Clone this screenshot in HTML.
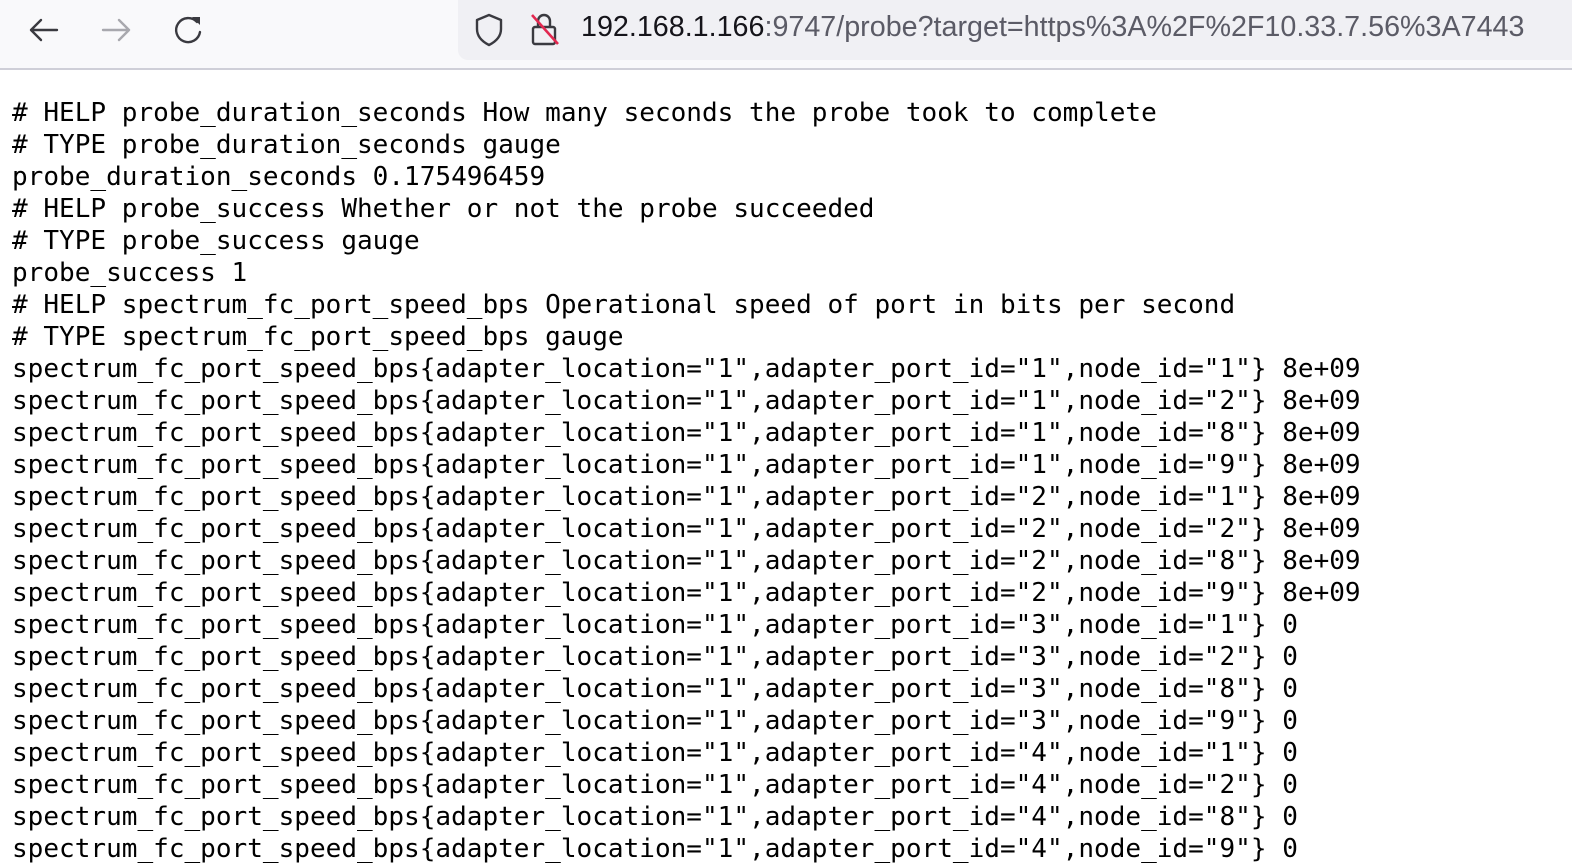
<!DOCTYPE html>
<html><head><style>
html,body{margin:0;padding:0;width:1572px;height:852px;overflow:hidden;background:#fff}
.bar{position:absolute;left:0;top:0;width:1572px;height:68px;background:#f9f9fb;border-bottom:2px solid #cfcfd8}
.url{position:absolute;left:458px;top:0;width:1114px;height:60px;background:#f0f0f4;border-radius:0 0 0 10px}
.u{position:absolute;left:581px;top:11px;font:28.7px "Liberation Sans",sans-serif;color:#15141a;white-space:nowrap}
.u span{color:#5b5b66}
pre{position:absolute;left:12px;top:97px;margin:0;font:26.05px/32px "DejaVu Sans Mono",monospace;color:#000}
</style></head><body>
<div class="bar">
<svg style="position:absolute;left:26px;top:14px" width="36" height="32" viewBox="0 0 36 32"><path d="M31 16H5M15 6L5 16l10 10" fill="none" stroke="#3a3a40" stroke-width="2.4" stroke-linecap="round" stroke-linejoin="round"/></svg>
<svg style="position:absolute;left:98px;top:14px" width="36" height="32" viewBox="0 0 36 32"><path d="M5 16h26M21 6l10 10-10 10" fill="none" stroke="#a8a8ae" stroke-width="2.4" stroke-linecap="round" stroke-linejoin="round"/></svg>
<svg style="position:absolute;left:170px;top:12px" width="36" height="36" viewBox="0 0 36 36"><path d="M27 10A12 12 0 1 0 30 20" fill="none" stroke="#3a3a40" stroke-width="2.4" stroke-linecap="round"/><path d="M22 5h8v8z" fill="#3a3a40"/></svg>
<div class="url"></div>
<svg style="position:absolute;left:472px;top:12px" width="34" height="36" viewBox="0 0 34 36"><path d="M17 3L5 8v9c0 8 6 13 12 16 6-3 12-8 12-16V8z" fill="none" stroke="#3a3a40" stroke-width="2.4" stroke-linejoin="round"/></svg>
<svg style="position:absolute;left:528px;top:10px" width="34" height="38" viewBox="0 0 34 38"><rect x="5" y="17" width="22" height="17" rx="2" fill="none" stroke="#3a3a40" stroke-width="2.4"/><path d="M10 17v-6a6 6 0 0 1 12 0v6" fill="none" stroke="#3a3a40" stroke-width="2.4"/><path d="M4 5l26 29" stroke="#e22850" stroke-width="2.6"/></svg>
<div class="u">192.168.1.166<span>:9747/probe?target=https%3A%2F%2F10.33.7.56%3A7443</span></div>
</div>
<pre># HELP probe_duration_seconds How many seconds the probe took to complete
# TYPE probe_duration_seconds gauge
probe_duration_seconds 0.175496459
# HELP probe_success Whether or not the probe succeeded
# TYPE probe_success gauge
probe_success 1
# HELP spectrum_fc_port_speed_bps Operational speed of port in bits per second
# TYPE spectrum_fc_port_speed_bps gauge
spectrum_fc_port_speed_bps{adapter_location="1",adapter_port_id="1",node_id="1"} 8e+09
spectrum_fc_port_speed_bps{adapter_location="1",adapter_port_id="1",node_id="2"} 8e+09
spectrum_fc_port_speed_bps{adapter_location="1",adapter_port_id="1",node_id="8"} 8e+09
spectrum_fc_port_speed_bps{adapter_location="1",adapter_port_id="1",node_id="9"} 8e+09
spectrum_fc_port_speed_bps{adapter_location="1",adapter_port_id="2",node_id="1"} 8e+09
spectrum_fc_port_speed_bps{adapter_location="1",adapter_port_id="2",node_id="2"} 8e+09
spectrum_fc_port_speed_bps{adapter_location="1",adapter_port_id="2",node_id="8"} 8e+09
spectrum_fc_port_speed_bps{adapter_location="1",adapter_port_id="2",node_id="9"} 8e+09
spectrum_fc_port_speed_bps{adapter_location="1",adapter_port_id="3",node_id="1"} 0
spectrum_fc_port_speed_bps{adapter_location="1",adapter_port_id="3",node_id="2"} 0
spectrum_fc_port_speed_bps{adapter_location="1",adapter_port_id="3",node_id="8"} 0
spectrum_fc_port_speed_bps{adapter_location="1",adapter_port_id="3",node_id="9"} 0
spectrum_fc_port_speed_bps{adapter_location="1",adapter_port_id="4",node_id="1"} 0
spectrum_fc_port_speed_bps{adapter_location="1",adapter_port_id="4",node_id="2"} 0
spectrum_fc_port_speed_bps{adapter_location="1",adapter_port_id="4",node_id="8"} 0
spectrum_fc_port_speed_bps{adapter_location="1",adapter_port_id="4",node_id="9"} 0</pre>
</body></html>
